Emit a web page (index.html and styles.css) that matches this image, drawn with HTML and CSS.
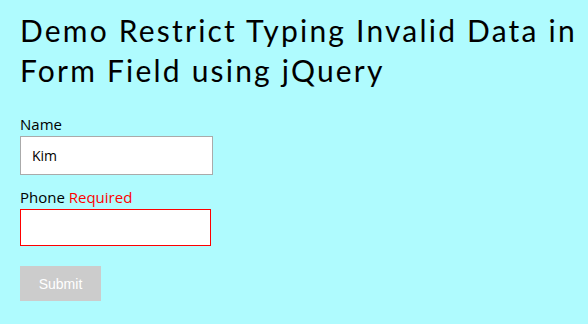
FILE: index.html
```html
<!DOCTYPE html>
<html lang="en">
<head>
    <meta charset="UTF-8">
    <title>Demo Restrict Typing Invalid Data</title>
    <link rel="stylesheet" href="styles.css">
</head>
<body>
<div class="page">
    <h1 class="title">Demo Restrict Typing Invalid Data in Form Field using jQuery</h1>
    <form class="demo-form" onsubmit="return false;">
        <div class="field">
            <label class="field-label" for="name">Name</label>
            <input type="text" class="field-input" id="name" value="Kim">
        </div>
        <div class="field">
            <label class="field-label" for="phone">Phone <span class="required">Required</span></label>
            <input type="text" class="field-input invalid" id="phone">
        </div>
        <button type="submit" class="btn-submit">Submit</button>
    </form>
</div>
</body>
</html>
```

FILE: styles.css
```css
* {
    box-sizing: border-box;
}

body {
    margin: 0;
    background-color: #affbfe;
    font-family: 'Open Sans', sans-serif;
    color: #000;
}

.page {
    padding: 10px 0 10px 20px;
}

.title {
    font-family: 'Lato', sans-serif;
    font-weight: normal;
    font-size: 30px;
    line-height: 40px;
    letter-spacing: 2.2px;
    margin: 0 0 24px;
}

.demo-form {
    display: flex;
    flex-direction: column;
    align-items: flex-start;
}

.field {
    display: flex;
    flex-direction: column;
    margin-bottom: 12px;
}

.field-label {
    font-size: 15px;
    line-height: 20px;
    margin-bottom: 2px;
}

.required {
    color: #ff0000;
}

.field-input {
    width: 193px;
    height: 39px;
    padding: 0 11px;
    border: 1px solid #aaa;
    background: #fff;
    font-family: 'Open Sans', sans-serif;
    font-size: 14px;
    color: #000;
    outline: none;
}

.field-input.invalid {
    width: 191px;
    height: 37px;
    border-color: #ff0000;
}

.btn-submit {
    margin-top: 8px;
    width: 81px;
    height: 35px;
    border: none;
    background-color: #ccc;
    color: #fff;
    font-family: 'Liberation Sans', Arial, sans-serif;
    font-size: 14px;
}
```
